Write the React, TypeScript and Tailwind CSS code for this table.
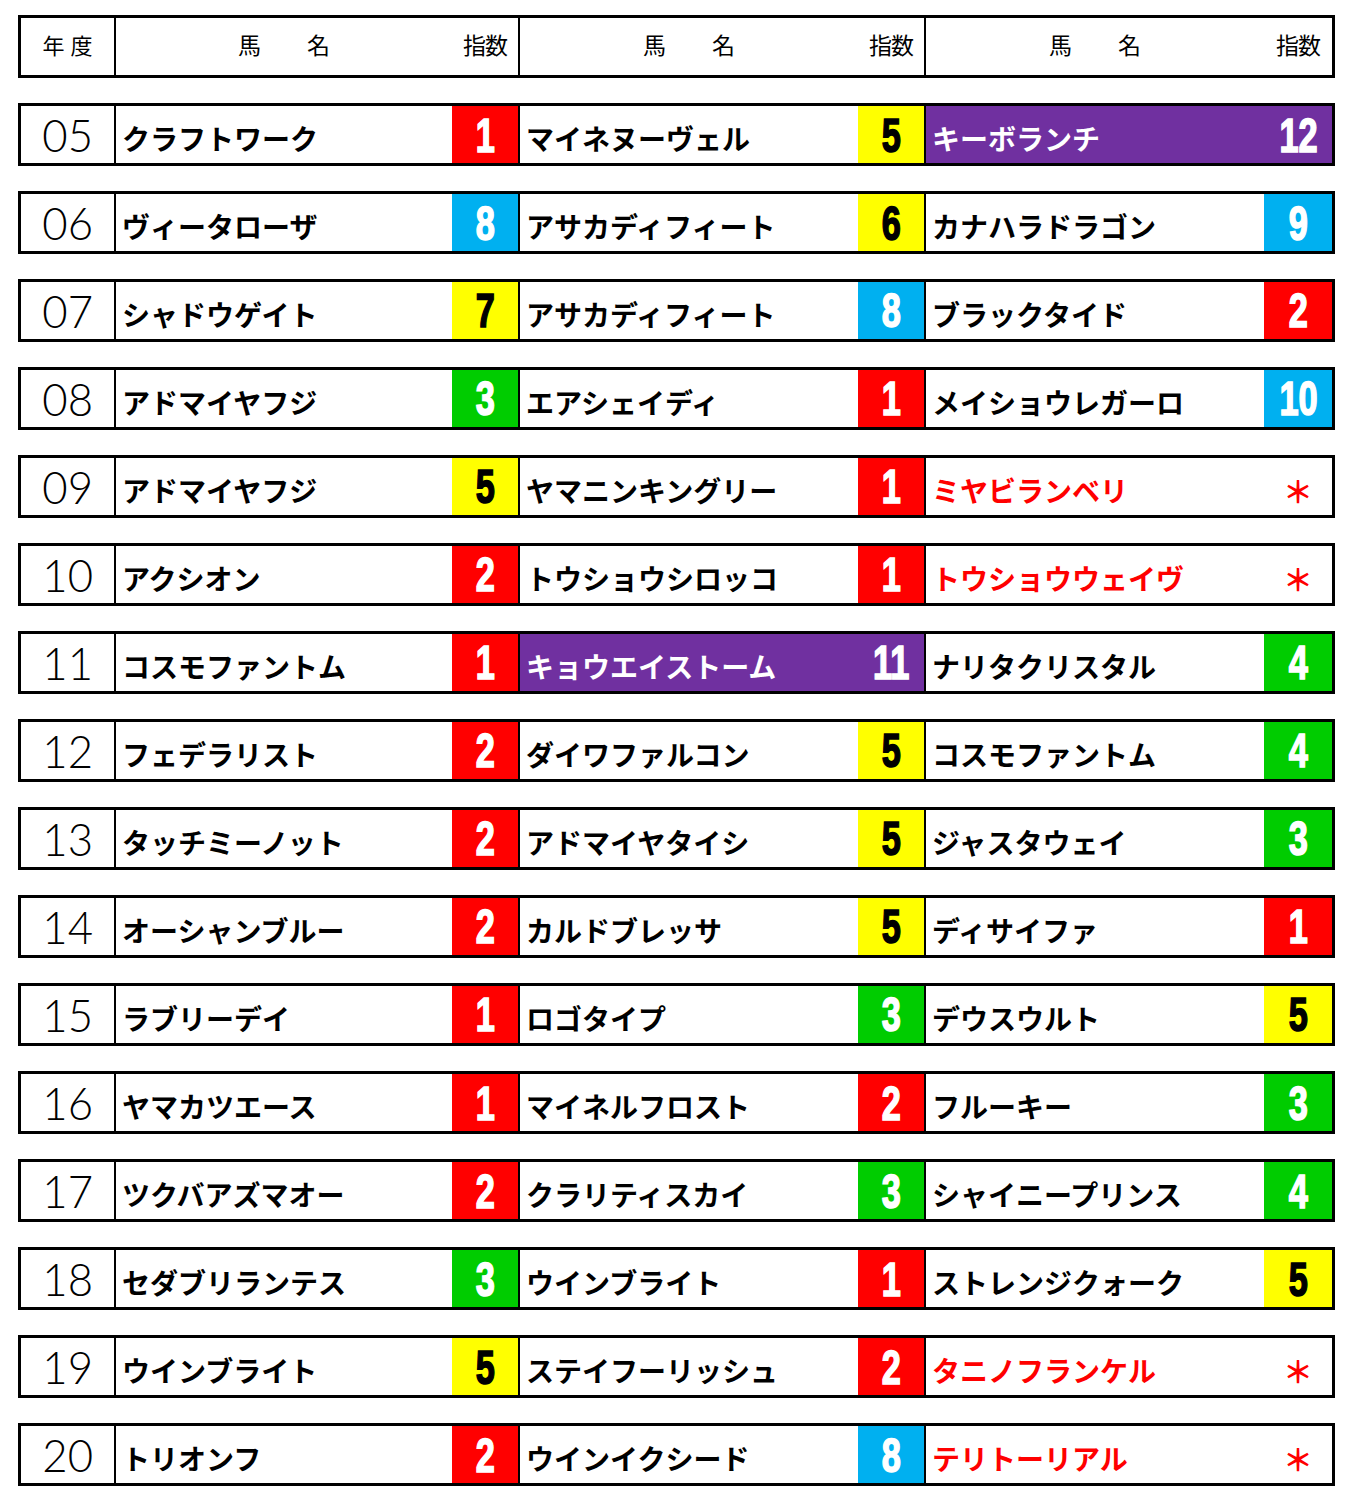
import React from 'react'

type Cell = { name: string; idx: number | null }
type Row = { year: string; cells: [Cell, Cell, Cell] }

const ROWS: Row[] = [
  { year: '05', cells: [{ name: 'クラフトワーク', idx: 1 }, { name: 'マイネヌーヴェル', idx: 5 }, { name: 'キーボランチ', idx: 12 }] },
  { year: '06', cells: [{ name: 'ヴィータローザ', idx: 8 }, { name: 'アサカディフィート', idx: 6 }, { name: 'カナハラドラゴン', idx: 9 }] },
  { year: '07', cells: [{ name: 'シャドウゲイト', idx: 7 }, { name: 'アサカディフィート', idx: 8 }, { name: 'ブラックタイド', idx: 2 }] },
  { year: '08', cells: [{ name: 'アドマイヤフジ', idx: 3 }, { name: 'エアシェイディ', idx: 1 }, { name: 'メイショウレガーロ', idx: 10 }] },
  { year: '09', cells: [{ name: 'アドマイヤフジ', idx: 5 }, { name: 'ヤマニンキングリー', idx: 1 }, { name: 'ミヤビランベリ', idx: null }] },
  { year: '10', cells: [{ name: 'アクシオン', idx: 2 }, { name: 'トウショウシロッコ', idx: 1 }, { name: 'トウショウウェイヴ', idx: null }] },
  { year: '11', cells: [{ name: 'コスモファントム', idx: 1 }, { name: 'キョウエイストーム', idx: 11 }, { name: 'ナリタクリスタル', idx: 4 }] },
  { year: '12', cells: [{ name: 'フェデラリスト', idx: 2 }, { name: 'ダイワファルコン', idx: 5 }, { name: 'コスモファントム', idx: 4 }] },
  { year: '13', cells: [{ name: 'タッチミーノット', idx: 2 }, { name: 'アドマイヤタイシ', idx: 5 }, { name: 'ジャスタウェイ', idx: 3 }] },
  { year: '14', cells: [{ name: 'オーシャンブルー', idx: 2 }, { name: 'カルドブレッサ', idx: 5 }, { name: 'ディサイファ', idx: 1 }] },
  { year: '15', cells: [{ name: 'ラブリーデイ', idx: 1 }, { name: 'ロゴタイプ', idx: 3 }, { name: 'デウスウルト', idx: 5 }] },
  { year: '16', cells: [{ name: 'ヤマカツエース', idx: 1 }, { name: 'マイネルフロスト', idx: 2 }, { name: 'フルーキー', idx: 3 }] },
  { year: '17', cells: [{ name: 'ツクバアズマオー', idx: 2 }, { name: 'クラリティスカイ', idx: 3 }, { name: 'シャイニープリンス', idx: 4 }] },
  { year: '18', cells: [{ name: 'セダブリランテス', idx: 3 }, { name: 'ウインブライト', idx: 1 }, { name: 'ストレンジクォーク', idx: 5 }] },
  { year: '19', cells: [{ name: 'ウインブライト', idx: 5 }, { name: 'ステイフーリッシュ', idx: 2 }, { name: 'タニノフランケル', idx: null }] },
  { year: '20', cells: [{ name: 'トリオンフ', idx: 2 }, { name: 'ウインイクシード', idx: 8 }, { name: 'テリトーリアル', idx: null }] },
]

const JP = "font-['Noto_Sans_CJK_JP',sans-serif]"

// colour of the index cell, by value
function idxBg(v: number | null): string {
  if (v === null) return 'bg-white'
  if (v >= 11) return 'bg-[#7030a0]'
  if (v === 5 || v === 6 || v === 7) return 'bg-[#ffff00]'
  if (v === 8 || v === 9 || v === 10) return 'bg-[#00b0f0]'
  if (v === 3 || v === 4) return 'bg-[#00cc00]'
  return 'bg-[#ff0000]'
}

function NameCell({ cell, w, last }: { cell: Cell; w: string; last?: boolean }) {
  const purple = cell.idx !== null && cell.idx >= 11
  const red = cell.idx === null
  return (
    <div className={`flex h-full ${last ? 'flex-1' : 'border-r-2 border-black'} ${purple ? 'bg-[#7030a0]' : ''}`}>
      <div className={`${w} flex items-center pl-[6px] pt-[7px]`}>
        <span className={`${JP} text-[28px] font-bold leading-none ${purple ? 'text-white' : red ? 'text-[#ff0000]' : 'text-black'}`}>
          {cell.name}
        </span>
      </div>
      <div className={`${last ? 'flex-1' : 'w-[66px]'} h-full flex items-center justify-center ${idxBg(cell.idx)}`}>
        {cell.idx === null ? (
          <span className={`${JP} text-[30px] font-bold text-[#ff0000] leading-none pt-[6px]`}>＊</span>
        ) : (
          <span
            className={`inline-block font-['Liberation_Sans_Narrow','Liberation_Sans',sans-serif] text-[44px] font-bold leading-none scale-x-[0.78] scale-y-[1.1] [-webkit-text-stroke:1.5px_currentColor] ${
              cell.idx === 5 || cell.idx === 6 || cell.idx === 7 ? 'text-black' : 'text-white'
            }`}
          >
            {cell.idx}
          </span>
        )}
      </div>
    </div>
  )
}

function HeaderGroup({ w, last }: { w: string; last?: boolean }) {
  return (
    <div className={`flex h-full ${last ? 'flex-1' : 'border-r-2 border-black'}`}>
      <div className={`${w} flex items-center justify-center pb-[4px]`}>
        <span className={`${JP} text-[23px] text-black`}>馬　　名</span>
      </div>
      <div className={`${last ? 'flex-1' : 'w-[66px]'} flex items-center justify-center pb-[4px]`}>
        <span className={`${JP} text-[23px] text-black tracking-[-1px]`}>指数</span>
      </div>
    </div>
  )
}

export default function App() {
  return (
    <div className="bg-white w-[1347px] h-[1499px] pl-[18px] pt-[15px]">
      <div className="w-[1317px]">
        {/* header */}
        <div className="flex h-[63px] border-[3px] border-black">
          <div className="w-[95px] border-r-2 border-black flex items-center justify-center pb-[4px]">
            <span className={`${JP} text-[22px] text-black tracking-[6px] pl-[6px]`}>年度</span>
          </div>
          <HeaderGroup w="w-[336px]" />
          <HeaderGroup w="w-[338px]" />
          <HeaderGroup w="w-[338px]" last />
        </div>

        {ROWS.map(r => (
          <div key={r.year} className="flex h-[63px] border-[3px] border-black mt-[25px] first-of-type:mt-[26px]">
            <div className="w-[95px] border-r-2 border-black flex items-center justify-center">
              <span className="font-['Lato','DejaVu_Sans',sans-serif] font-light text-[46px] leading-none text-black inline-block scale-x-[0.95]">
                {r.year}
              </span>
            </div>
            <NameCell cell={r.cells[0]} w="w-[336px]" />
            <NameCell cell={r.cells[1]} w="w-[338px]" />
            <NameCell cell={r.cells[2]} w="w-[338px]" last />
          </div>
        ))}
      </div>
    </div>
  )
}
